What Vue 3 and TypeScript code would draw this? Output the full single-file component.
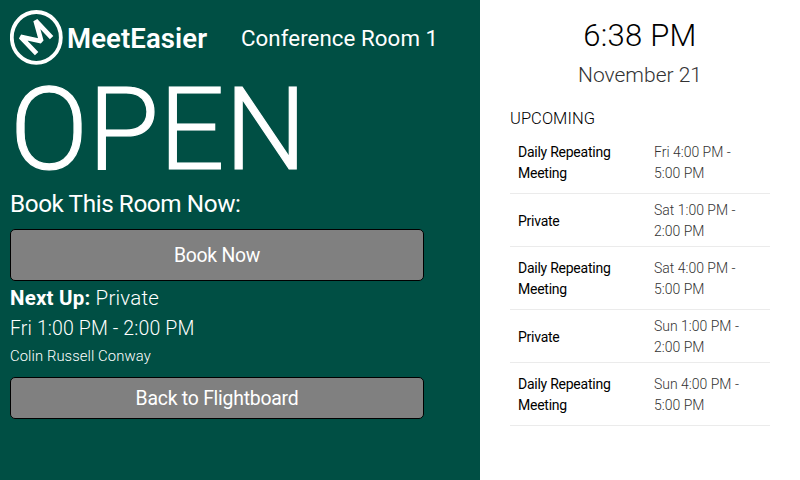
<script setup lang="ts">
interface Meeting {
  name: string
  start: string
  end: string
}

const upcoming: Meeting[] = [
  { name: 'Daily Repeating Meeting', start: 'Fri 4:00 PM -', end: '5:00 PM' },
  { name: 'Private', start: 'Sat 1:00 PM -', end: '2:00 PM' },
  { name: 'Daily Repeating Meeting', start: 'Sat 4:00 PM -', end: '5:00 PM' },
  { name: 'Private', start: 'Sun 1:00 PM -', end: '2:00 PM' },
  { name: 'Daily Repeating Meeting', start: 'Sun 4:00 PM -', end: '5:00 PM' },
]
</script>

<template>
  <div class="screen">
    <main class="status">
      <header class="top">
        <svg class="mark" viewBox="0 0 54 56" fill="none" stroke="#fff">
          <ellipse cx="26.3" cy="27.4" rx="24.5" ry="25.4" stroke-width="3.8" />
          <path d="M26.6 43.6 L10.6 26.8 L31.3 31.2 L25.6 10.6 L41.6 27.6" stroke-width="4.7" stroke-linejoin="bevel" />
        </svg>
        <span class="brand">MeetEasier</span>
        <span class="room">Conference Room 1</span>
      </header>
      <h1 class="state">OPEN</h1>
      <h2 class="prompt">Book This Room Now:</h2>
      <button class="btn book" type="button">Book Now</button>
      <section class="next">
        <p class="title"><strong>Next Up:</strong> Private</p>
        <p class="slot">Fri 1:00 PM - 2:00 PM</p>
        <p class="organizer">Colin Russell Conway</p>
      </section>
      <button class="btn back" type="button">Back to Flightboard</button>
    </main>
    <aside class="side">
      <div class="time">6:38 PM</div>
      <div class="date">November 21</div>
      <h3 class="heading">UPCOMING</h3>
      <ul class="list">
        <li v-for="(m, i) in upcoming" :key="i" class="row" :class="{ tall: m.name !== 'Private' }">
          <span class="name">{{ m.name }}</span>
          <span class="when">{{ m.start }}<br />{{ m.end }}</span>
        </li>
      </ul>
    </aside>
  </div>
</template>

<style>
body {
  margin: 0;
  background: #fff;
}
</style>

<style scoped>
.screen {
  display: grid;
  grid-template-columns: 480px 320px;
  width: 800px;
  height: 480px;
  overflow: hidden;
  font-family: Roboto, 'Noto Sans', sans-serif;
  font-weight: 300;
}
h1, h2, h3, p, ul {
  margin: 0;
  padding: 0;
  font-weight: 300;
}
.status {
  box-sizing: border-box;
  display: flex;
  flex-direction: column;
  align-items: flex-start;
  padding: 10px;
  background: #004f44;
  color: #fff;
}
.top {
  display: flex;
  align-items: center;
  height: 56px;
}
.mark {
  width: 54px;
  height: 56px;
}
.brand {
  width: 174px;
  padding-left: 3px;
  font-size: 27.5px;
  font-weight: 600;
  letter-spacing: 0.1px;
}
.room {
  font-size: 22.3px;
  font-weight: 400;
  letter-spacing: 0.06px;
}
.state {
  height: 128px;
  font-size: 115.3px;
  line-height: 128px;
  letter-spacing: 0;
  -webkit-text-stroke: 1.2px #fff;
}
.prompt {
  height: 35px;
  font-size: 24.3px;
  font-weight: 400;
  line-height: 20px;
  letter-spacing: -0.42px;
}
.btn {
  box-sizing: border-box;
  width: 414px;
  padding: 0;
  border: 1px solid #000;
  border-radius: 5px;
  background: #808080;
  color: #fff;
  font-family: inherit;
  font-size: 19.4px;
  font-weight: 400;
}
.book {
  height: 52px;
  letter-spacing: -0.3px;
}
.back {
  height: 42px;
  letter-spacing: -0.24px;
}
.next {
  display: flex;
  flex-direction: column;
  height: 96px;
}
.title {
  font-size: 20.5px;
  line-height: 34px;
  letter-spacing: 0.2px;
}
.title strong {
  font-weight: 700;
}
.slot {
  font-size: 19.5px;
  line-height: 28px;
  letter-spacing: 0.12px;
}
.organizer {
  font-size: 14.8px;
  line-height: 26px;
  letter-spacing: 0.1px;
}
.side {
  display: flex;
  flex-direction: column;
  padding: 17px 30px 0;
  color: #000;
}
.time {
  font-size: 31px;
  line-height: 38px;
  letter-spacing: 0.25px;
  text-align: center;
}
.date {
  color: #333;
  font-size: 21px;
  line-height: 41px;
  text-align: center;
}
.heading {
  height: 35px;
  font-size: 16.5px;
  line-height: 45px;
  letter-spacing: 0.05px;
}
.list {
  list-style: none;
}
.row {
  box-sizing: border-box;
  display: grid;
  grid-template-columns: 120px 1fr;
  column-gap: 16px;
  align-items: center;
  height: 53px;
  padding: 6px 8px 4px;
  border-bottom: 1px solid #ebebeb;
  font-size: 14px;
  line-height: 21px;
}
.row.tall {
  height: 63px;
  padding: 11px 8px 9px;
}
.name {
  width: 110px;
  font-weight: 400;
  letter-spacing: -0.25px;
}
.when {
  color: #333;
}
</style>
